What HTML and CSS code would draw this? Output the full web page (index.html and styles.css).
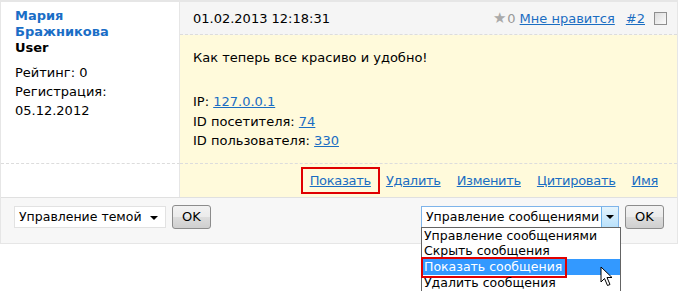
FILE: index.html
```html
<!DOCTYPE html>
<html>
<head>
<meta charset="utf-8">
<link rel="stylesheet" href="styles.css">
</head>
<body>
<div class="forum">
  <div class="post">
    <div class="author">
      <div class="name">Мария Бражникова</div>
      <div class="rank">User</div>
      <div class="meta">
        <div>Рейтинг: 0</div>
        <div>Регистрация:</div>
        <div>05.12.2012</div>
      </div>
    </div>
    <div class="body">
      <div class="head">
        <span class="date">01.02.2013 12:18:31</span>
        <span class="tools">
          <span class="star">★</span><span class="count">0</span>
          <a class="link like" href="#">Мне нравится</a>
          <a class="link num" href="#">#2</a>
          <span class="check"></span>
        </span>
      </div>
      <div class="text">
        <p class="msg">Как теперь все красиво и удобно!</p>
        <div class="info">
          <div>IP: <a class="link" href="#">127.0.0.1</a></div>
          <div>ID посетителя: <a class="link" href="#">74</a></div>
          <div>ID пользователя: <a class="link" href="#">330</a></div>
        </div>
      </div>
    </div>
    <div class="author-foot"></div>
    <div class="actions">
      <a class="link act boxed" href="#">Показать</a>
      <a class="link act" href="#">Удалить</a>
      <a class="link act" href="#">Изменить</a>
      <a class="link act" href="#">Цитировать</a>
      <a class="link act" href="#">Имя</a>
    </div>
  </div>
  <div class="foot">
    <div class="ctl">
      <span class="sel sel-theme">Управление темой<span class="tri"></span></span>
      <span class="btn">OK</span>
    </div>
    <div class="ctl">
      <span class="sel sel-msg">Управление сообщениями<span class="arrowbtn"><span class="tri"></span></span>
        <span class="list">
          <span class="opt">Управление сообщениями</span>
          <span class="opt">Скрыть сообщения</span>
          <span class="opt hl"><span class="hlbox">Показать сообщения</span></span>
          <span class="opt">Удалить сообщения</span>
        </span>
        <svg class="cursor" width="14" height="22" viewBox="0 0 14 22"><path d="M1 1 L1 16 L4.5 12.5 L7.5 19.5 L10 18.5 L7 11.5 L12 11.5 Z" fill="#fff" stroke="#000" stroke-width="1"/></svg>
      </span>
      <span class="btn">OK</span>
    </div>
  </div>
</div>
</body>
</html>
```
FILE: styles.css
```css
* { box-sizing: border-box; }
html { height: 100%; }
body {
  margin: 0;
  min-height: 100%;
  background: #fff;
  font-family: "DejaVu Sans", Verdana, sans-serif;
  font-size: 13px;
  color: #000;
}
.forum {
  width: 678px;
  border: 1px solid #e6e6e6;
  border-top-width: 2px;
}
.post {
  display: grid;
  grid-template-columns: 179px 1fr;
  grid-template-rows: auto 33px;
}
.author {
  background: #fff;
  border-right: 1px solid #e6e6e6;
  padding: 6px 0 0 14px;
}
.name {
  color: #1a6ec6;
  font-weight: bold;
  line-height: 16px;
  width: 120px;
}
.rank {
  font-weight: bold;
  line-height: 16px;
}
.meta {
  margin-top: 7px;
  line-height: 19px;
}
.body {
  background: #fffadb;
  border-bottom: 1px dashed #dcdcdc;
}
.head {
  background: #f5f5f5;
  height: 33px;
  border-bottom: 1px dashed #dcdcdc;
  display: flex;
  align-items: center;
  justify-content: space-between;
  padding: 0 10px 0 13px;
}
.tools {
  display: flex;
  align-items: center;
}
.star { color: #aaa; font-size: 15px; margin-right: 1px; }
.count { color: #999; margin-right: 4px; }
.link {
  color: #1a6dc2;
  text-decoration: underline;
}
.num { margin-left: 11px; }
.check {
  display: inline-block;
  width: 13px;
  height: 13px;
  margin-left: 9px;
  border: 1px solid #8f8f8f;
  background: linear-gradient(135deg, #dcdcdc, #fbfbfb);
}
.text {
  padding: 13px 13px 12px 13px;
}
.msg {
  margin: 0 0 25px 0;
  line-height: 19px;
}
.info {
  line-height: 19.5px;
}
.author-foot {
  border-right: 1px solid #e6e6e6;
  border-top: 1px dashed #dcdcdc;
  margin-top: -1px;
}
.actions {
  background: #fffadb;
  display: flex;
  justify-content: flex-end;
  align-items: center;
  gap: 16px;
  padding-right: 19px;
  letter-spacing: -0.3px;
}
.boxed {
  outline: 2px solid #e00000;
  padding: 4px 7px;
  margin: 0 -8px 0 -7px;
}
.foot {
  background: #f7f7f7;
  border-top: 1px solid #e0e0e0;
  height: 46px;
  display: flex;
  justify-content: space-between;
  align-items: flex-start;
  padding: 7px 13px 0 13px;
}
.ctl {
  display: flex;
  align-items: center;
  gap: 6px;
}
.sel {
  position: relative;
  display: flex;
  align-items: center;
  height: 22px;
  background: #fff;
  border: 1px solid #e2e2e2;
  font-size: 12.5px;
  padding-left: 4px;
  white-space: nowrap;
}
.sel-theme { width: 152px; }
.sel-theme .tri { position: absolute; right: 7px; top: 9px; }
.sel-msg {
  width: 198px;
  border-color: #7eb4ea;
}
.tri {
  width: 0; height: 0;
  border-left: 4px solid transparent;
  border-right: 4px solid transparent;
  border-top: 4px solid #000;
}
.arrowbtn {
  position: absolute;
  right: 0;
  top: 0;
  bottom: 0;
  width: 17px;
  background: linear-gradient(#e5f4fd, #b9e1fb);
  border-left: 1px solid #6bb0e8;
  display: flex;
  align-items: center;
  justify-content: center;
}
.btn {
  display: inline-flex;
  align-items: center;
  justify-content: center;
  width: 39px;
  height: 24px;
  border: 1px solid #8c8c8c;
  border-radius: 3px;
  background: linear-gradient(#f2f2f2, #ebebeb 50%, #dddddd 51%, #cfcfcf);
  font-size: 13px;
}
.list {
  position: absolute;
  left: -1px;
  top: 20px;
  width: 200px;
  background: #fff;
  border: 1px solid #646464;
  display: block;
  z-index: 2;
}
.opt {
  display: block;
  height: 16px;
  line-height: 16px;
  padding-left: 2px;
}
.opt:first-child { height: 15px; line-height: 15px; }
.opt.hl {
  background: #3399ff;
  color: #fff;
}
.hlbox {
  display: inline-block;
  height: 17px;
  outline: 2px solid #e00000;
  padding: 0 3px 0 1px;
  margin-left: -1px;
}
.cursor {
  position: absolute;
  left: 178px;
  top: 59px;
  z-index: 3;
}
```
